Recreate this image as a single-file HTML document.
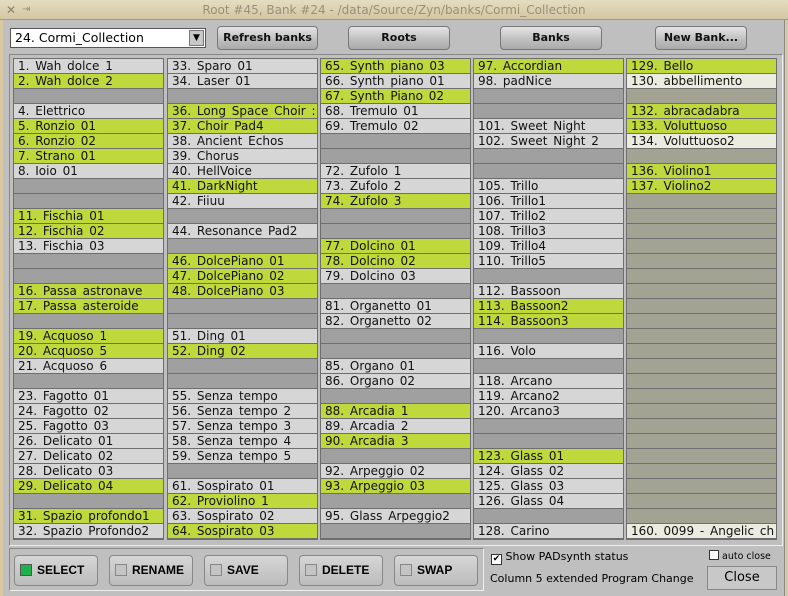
<!DOCTYPE html>
<html><head><meta charset="utf-8"><style>
*{margin:0;padding:0;box-sizing:border-box}
body{width:788px;height:596px;background:#bfbfbf;font-family:"DejaVu Sans","Liberation Sans",sans-serif;position:relative;overflow:hidden}
.abs{position:absolute}
#title{left:0;top:0;width:788px;height:20px;background:linear-gradient(#e6dcc0,#d2c6a4);color:#9a9078;font-size:12px;text-align:center;line-height:20px;border-bottom:1px solid #a89c80}
#lb{left:0;top:20px;width:3px;height:576px;background:#d8c8a0}
#rb{right:0;top:20px;width:4px;height:576px;background:#d8c8a0;border-left:1px solid #888}
.btn{position:absolute;background:linear-gradient(#e4e4e4,#bdbdbd 60%,#aaa);border:1px solid #777;border-radius:4px;font-weight:bold;font-size:11px;text-align:center;color:#111;font-family:"DejaVu Sans",sans-serif}
#frame{left:9px;top:54px;width:774px;height:492px;border:1px solid #888;border-right-color:#eee;border-bottom-color:#eee}
.col{position:absolute;top:58px;width:151px;background:#6e6e6e;padding:1px 1px 0 1px;height:482px}
.c{height:14px;margin-bottom:1px;font-size:12px;line-height:14px;padding-left:4px;white-space:nowrap;overflow:hidden;color:#111;word-spacing:2px}
.g{background:#bfd83c}.l{background:#d6d6d6}.e{background:#a0a0a0}
.col5 .l{background:#ebebdf}.col5 .e{background:#a3a393}
.bb{position:absolute;top:555px;width:84px;height:31px;background:linear-gradient(#d6d6d6,#bcbcbc);border:1px solid #888;border-radius:4px;font-weight:bold;font-size:12px;line-height:29px;padding-left:22px;font-family:"Liberation Sans",sans-serif;white-space:nowrap}
.bb i{position:absolute;left:5px;top:8px;width:12px;height:12px;border:1px solid #888;background:#c4c4c4}
</style></head><body>
<div id="title" class="abs"><span style="position:absolute;left:6px;color:#8a806a;font-weight:bold">✕</span><span style="position:absolute;left:22px;font-size:10px">⇥</span>Root #45, Bank #24 - /data/Source/Zyn/banks/Cormi_Collection</div>
<div id="lb" class="abs"></div><div id="rb" class="abs"></div>
<div class="abs" style="left:10px;top:28px;width:196px;height:20px;background:#fff;border:1px solid #555;font-size:12.5px;line-height:18px;padding-left:4px">24. Cormi_Collection<span style="position:absolute;right:1px;top:1px;width:15px;height:16px;background:#c8c8c8;border:1px solid #777;font-size:9px;text-align:center;line-height:15px">▼</span></div>
<div class="btn" style="left:217px;top:26px;width:101px;height:24px;line-height:22px">Refresh banks</div>
<div class="btn" style="left:348px;top:26px;width:102px;height:24px;line-height:22px">Roots</div>
<div class="btn" style="left:500px;top:26px;width:102px;height:24px;line-height:22px">Banks</div>
<div class="btn" style="left:655px;top:26px;width:92px;height:24px;line-height:22px">New Bank...</div>
<div id="frame" class="abs"></div>
<div class="col" style="left:13px">
<div class="c l">1. Wah dolce 1</div><div class="c g">2. Wah dolce 2</div><div class="c e"></div><div class="c l">4. Elettrico</div><div class="c g">5. Ronzio 01</div><div class="c g">6. Ronzio 02</div><div class="c g">7. Strano 01</div><div class="c l">8. Ioio 01</div><div class="c e"></div><div class="c e"></div><div class="c g">11. Fischia 01</div><div class="c g">12. Fischia 02</div><div class="c l">13. Fischia 03</div><div class="c e"></div><div class="c e"></div><div class="c g">16. Passa astronave</div><div class="c g">17. Passa asteroide</div><div class="c e"></div><div class="c g">19. Acquoso 1</div><div class="c g">20. Acquoso 5</div><div class="c l">21. Acquoso 6</div><div class="c e"></div><div class="c l">23. Fagotto 01</div><div class="c l">24. Fagotto 02</div><div class="c l">25. Fagotto 03</div><div class="c l">26. Delicato 01</div><div class="c l">27. Delicato 02</div><div class="c l">28. Delicato 03</div><div class="c g">29. Delicato 04</div><div class="c e"></div><div class="c g">31. Spazio profondo1</div><div class="c l">32. Spazio Profondo2</div>
</div>
<div class="col" style="left:167px">
<div class="c l">33. Sparo 01</div><div class="c l">34. Laser 01</div><div class="c e"></div><div class="c g">36. Long Space Choir :</div><div class="c g">37. Choir Pad4</div><div class="c l">38. Ancient Echos</div><div class="c l">39. Chorus</div><div class="c l">40. HellVoice</div><div class="c g">41. DarkNight</div><div class="c l">42. Fiiuu</div><div class="c e"></div><div class="c l">44. Resonance Pad2</div><div class="c e"></div><div class="c g">46. DolcePiano 01</div><div class="c g">47. DolcePiano 02</div><div class="c g">48. DolcePiano 03</div><div class="c e"></div><div class="c e"></div><div class="c l">51. Ding 01</div><div class="c g">52. Ding 02</div><div class="c e"></div><div class="c e"></div><div class="c l">55. Senza tempo</div><div class="c l">56. Senza tempo 2</div><div class="c l">57. Senza tempo 3</div><div class="c l">58. Senza tempo 4</div><div class="c l">59. Senza tempo 5</div><div class="c e"></div><div class="c l">61. Sospirato 01</div><div class="c g">62. Proviolino 1</div><div class="c l">63. Sospirato 02</div><div class="c g">64. Sospirato 03</div>
</div>
<div class="col" style="left:320px">
<div class="c g">65. Synth piano 03</div><div class="c l">66. Synth piano 01</div><div class="c g">67. Synth Piano 02</div><div class="c l">68. Tremulo 01</div><div class="c l">69. Tremulo 02</div><div class="c e"></div><div class="c e"></div><div class="c l">72. Zufolo 1</div><div class="c l">73. Zufolo 2</div><div class="c g">74. Zufolo 3</div><div class="c e"></div><div class="c e"></div><div class="c g">77. Dolcino 01</div><div class="c g">78. Dolcino 02</div><div class="c l">79. Dolcino 03</div><div class="c e"></div><div class="c l">81. Organetto 01</div><div class="c l">82. Organetto 02</div><div class="c e"></div><div class="c e"></div><div class="c l">85. Organo 01</div><div class="c l">86. Organo 02</div><div class="c e"></div><div class="c g">88. Arcadia 1</div><div class="c l">89. Arcadia 2</div><div class="c g">90. Arcadia 3</div><div class="c e"></div><div class="c l">92. Arpeggio 02</div><div class="c g">93. Arpeggio 03</div><div class="c e"></div><div class="c l">95. Glass Arpeggio2</div><div class="c e"></div>
</div>
<div class="col" style="left:473px">
<div class="c g">97. Accordian</div><div class="c l">98. padNice</div><div class="c e"></div><div class="c e"></div><div class="c l">101. Sweet Night</div><div class="c l">102. Sweet Night 2</div><div class="c e"></div><div class="c e"></div><div class="c l">105. Trillo</div><div class="c l">106. Trillo1</div><div class="c l">107. Trillo2</div><div class="c l">108. Trillo3</div><div class="c l">109. Trillo4</div><div class="c l">110. Trillo5</div><div class="c e"></div><div class="c l">112. Bassoon</div><div class="c g">113. Bassoon2</div><div class="c g">114. Bassoon3</div><div class="c e"></div><div class="c l">116. Volo</div><div class="c e"></div><div class="c l">118. Arcano</div><div class="c l">119. Arcano2</div><div class="c l">120. Arcano3</div><div class="c e"></div><div class="c e"></div><div class="c g">123. Glass 01</div><div class="c l">124. Glass 02</div><div class="c l">125. Glass 03</div><div class="c l">126. Glass 04</div><div class="c e"></div><div class="c l">128. Carino</div>
</div>
<div class="col col5" style="left:626px">
<div class="c g">129. Bello</div><div class="c l">130. abbellimento</div><div class="c e"></div><div class="c g">132. abracadabra</div><div class="c g">133. Voluttuoso</div><div class="c l">134. Voluttuoso2</div><div class="c e"></div><div class="c g">136. Violino1</div><div class="c g">137. Violino2</div>
<div class="c e"></div><div class="c e"></div><div class="c e"></div><div class="c e"></div><div class="c e"></div><div class="c e"></div><div class="c e"></div><div class="c e"></div><div class="c e"></div><div class="c e"></div><div class="c e"></div><div class="c e"></div><div class="c e"></div><div class="c e"></div><div class="c e"></div><div class="c e"></div><div class="c e"></div><div class="c e"></div><div class="c e"></div><div class="c e"></div><div class="c e"></div><div class="c e"></div>
<div class="c l">160. 0099 - Angelic ch</div>
</div>
<div class="abs" style="left:9px;top:548px;width:475px;height:43px;border:1px solid #888;border-right-color:#eee;border-bottom-color:#eee"></div>
<div class="bb" style="left:14px"><i style="background:#1fb14a;border-color:#555"></i>SELECT</div>
<div class="bb" style="left:109px"><i></i>RENAME</div>
<div class="bb" style="left:204px"><i></i>SAVE</div>
<div class="bb" style="left:299px"><i></i>DELETE</div>
<div class="bb" style="left:394px"><i></i>SWAP</div>
<div class="abs" style="left:491px;top:550px;font-size:11px;line-height:13px"><span style="display:inline-block;width:11px;height:11px;border:1px solid #333;background:#fff;font-size:9px;line-height:9px;text-align:center;vertical-align:-1px">✔</span> Show PADsynth status</div>
<div class="abs" style="left:490px;top:572px;font-size:11px">Column 5 extended Program Change</div>
<div class="abs" style="left:709px;top:550px;font-size:9.5px;line-height:12px"><span style="display:inline-block;width:10px;height:10px;border:1px solid #333;background:#fff;vertical-align:-1px"></span> auto close</div>
<div class="abs" style="left:707px;top:566px;width:70px;height:24px;border:1px solid #888;background:#c8c8c8;font-size:13px;text-align:center;line-height:22px">Close</div>
</body></html>
